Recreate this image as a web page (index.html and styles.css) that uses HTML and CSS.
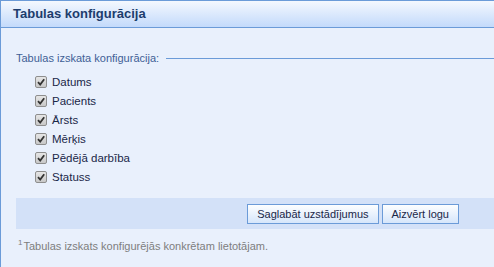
FILE: index.html
```html
<!DOCTYPE html>
<html lang="lv">
<head>
  <meta charset="UTF-8" />
  <title>Tabulas konfigurācija</title>
  <link rel="stylesheet" href="styles.css">
</head>
<body>
  <div class="panel">
    <header class="panel-head">Tabulas konfigurācija</header>

    <div class="panel-body">
      <div class="legend">
        <span>Tabulas izskata konfigurācija:</span>
        <span class="legend-line"></span>
      </div>

      <ul class="columns">
        <li><span class="check"><svg viewBox="0 0 10 10"><path d="M2 5.2 L4.2 7.6 L8.2 2.2" /></svg></span>Datums</li>
        <li><span class="check"><svg viewBox="0 0 10 10"><path d="M2 5.2 L4.2 7.6 L8.2 2.2" /></svg></span>Pacients</li>
        <li><span class="check"><svg viewBox="0 0 10 10"><path d="M2 5.2 L4.2 7.6 L8.2 2.2" /></svg></span>Ārsts</li>
        <li><span class="check"><svg viewBox="0 0 10 10"><path d="M2 5.2 L4.2 7.6 L8.2 2.2" /></svg></span>Mērķis</li>
        <li><span class="check"><svg viewBox="0 0 10 10"><path d="M2 5.2 L4.2 7.6 L8.2 2.2" /></svg></span>Pēdējā darbība</li>
        <li><span class="check"><svg viewBox="0 0 10 10"><path d="M2 5.2 L4.2 7.6 L8.2 2.2" /></svg></span>Statuss</li>
      </ul>

      <div class="actions">
        <button>Saglabāt uzstādījumus</button>
        <button>Aizvērt logu</button>
      </div>

      <p class="note"><sup>1</sup>Tabulas izskats konfigurējās konkrētam lietotājam.</p>
    </div>
  </div>
</body>
</html>
```

FILE: styles.css
```css
* {
  box-sizing: border-box;
}

body, html {
  margin: 0;
  padding: 0;
  height: 100vh;
  overflow: hidden;
  font-family: 'Liberation Sans', Arial, sans-serif;
  font-size: 11px;
}

.panel {
  height: 100vh;
  background: #e9f0fc;
  border-top: 1px solid #6b9bd8;
  border-left: 1px solid #6b9bd8;
}

.panel-head {
  height: 27px;
  line-height: 26px;
  padding-left: 12px;
  font-size: 13px;
  font-weight: bold;
  color: #1d3d6d;
  background: linear-gradient(to bottom, #f4f8fe, #c3dafb);
  border-bottom: 1px solid #6b9bd8;
}

.panel-body {
  padding: 23px 0 0 15px;
}

.legend {
  display: flex;
  align-items: center;
  color: #3f5f96;
  font-size: 11px;
  height: 14px;
}

.legend-line {
  flex: 1;
  height: 1px;
  margin-left: 7px;
  background: #6b9bd8;
}

.columns {
  list-style: none;
  margin: 7px 0 0;
  padding: 0 0 0 19px;
}

.columns li {
  display: flex;
  align-items: center;
  height: 19px;
  font-size: 11.5px;
  color: #1a2748;
}

.check {
  display: inline-block;
  width: 12px;
  height: 12px;
  margin-right: 5px;
  border: 1px solid #8e8e8e;
  border-radius: 2px;
  background: linear-gradient(to bottom, #e6e6e6, #c8c8c8);
}

.check svg {
  display: block;
  width: 10px;
  height: 10px;
  fill: none;
  stroke: #333;
  stroke-width: 1.8;
}

.actions {
  margin-top: 12px;
  height: 31px;
  padding-right: 35px;
  display: flex;
  justify-content: flex-end;
  align-items: center;
  gap: 3px;
  background: #d3e1f8;
}

.actions button {
  height: 20px;
  padding: 0 9px;
  font-family: inherit;
  font-size: 11px;
  color: #1a2748;
  border: 1px solid #6b9bd8;
  background: linear-gradient(to bottom, #fdfeff, #d6e6fb);
}

.note {
  margin: 9px 0 0 2px;
  font-size: 11px;
  color: #7e7e7e;
}

.note sup {
  font-size: 8px;
  margin-right: 1px;
}
```
